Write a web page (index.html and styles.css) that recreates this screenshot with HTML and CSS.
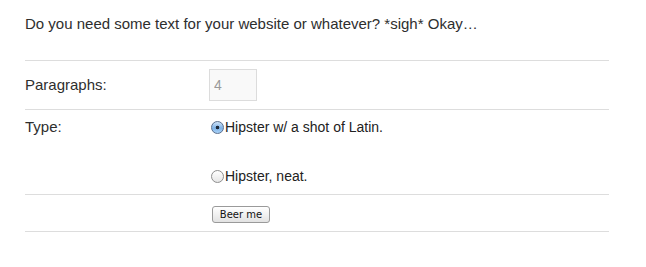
FILE: index.html
```html
<!DOCTYPE html>
<html>
<head>
<meta charset="utf-8">
<link rel="stylesheet" href="styles.css">
</head>
<body>
<div class="page">
  <p class="intro">Do you need some text for your website or whatever? *sigh* Okay…</p>
  <form class="form">
    <div class="row row-paras">
      <label class="label" for="paras">Paragraphs:</label>
      <div class="field"><input class="num" id="paras" type="text" value="4"></div>
    </div>
    <div class="row row-type">
      <div class="label">Type:</div>
      <div class="field radios">
        <label class="opt"><input class="radio" type="radio" name="type" checked>Hipster w/ a shot of Latin.</label>
        <label class="opt"><input class="radio" type="radio" name="type">Hipster, neat.</label>
      </div>
    </div>
    <div class="row row-submit">
      <div class="label"></div>
      <div class="field"><button class="btn" type="button">Beer me</button></div>
    </div>
  </form>
</div>
</body>
</html>
```
FILE: styles.css
```css
html, body {
  margin: 0;
  padding: 0;
  background: #fff;
}
body {
  font-family: "Liberation Sans", Arial, sans-serif;
  font-size: 15px;
  color: #333;
}
.page {
  width: 584px;
  margin-left: 25px;
  padding-top: 14px;
}
.intro {
  margin: 0 0 26px 0;
  line-height: 20px;
  font-size: 15px;
  color: #2e2e2e;
}
.form {
  margin: 0;
  border-bottom: 1px solid #dddddd;
}
.row {
  display: grid;
  grid-template-columns: 184px 1fr;
  border-top: 1px solid #dddddd;
  line-height: 18px;
}
.row-paras {
  padding: 8px 0;
  align-items: center;
}
.row-type {
  padding: 8px 0 9px 0;
}
.row-submit {
  padding: 11px 0 8px 0;
}
.label {
  color: #2e2e2e;
  font-size: 15px;
}
.field {
  display: flex;
  align-items: center;
}
.num {
  box-sizing: border-box;
  width: 48px;
  height: 32px;
  margin: 0;
  padding: 0 0 0 4px;
  border: 1px solid #dcdcdc;
  background: #f9f9f9;
  color: #999;
  font-family: "Liberation Sans", Arial, sans-serif;
  font-size: 14px;
  outline: none;
}
.radios {
  flex-direction: column;
  align-items: flex-start;
  gap: 31px;
}
.opt {
  display: flex;
  align-items: center;
  height: 18px;
  font-size: 14px;
  color: #222;
}
.radio {
  -webkit-appearance: none;
  appearance: none;
  box-sizing: border-box;
  width: 13px;
  height: 13px;
  margin: 1px 1px 0 2px;
  border-radius: 50%;
  border: 1px solid #8e8e8e;
  background: linear-gradient(#ffffff, #e6e6e6);
}
.radio:checked {
  border-color: #5a6f8e;
  background: radial-gradient(circle at 50% 50%, #1d2a3a 0 1.6px, transparent 2.1px),
              linear-gradient(#cfe3f8, #7fb2e6 55%, #a9d2f7);
}
.btn {
  box-sizing: border-box;
  width: 58px;
  height: 17px;
  margin: 0 0 0 3px;
  padding: 0;
  border: 1px solid #9a9a9a;
  border-radius: 3px;
  background: linear-gradient(#ffffff, #f1f1f1 50%, #e2e2e2);
  font-family: "DejaVu Sans", "Lucida Grande", sans-serif;
  font-size: 10px;
  line-height: 15px;
  color: #111;
}
```
